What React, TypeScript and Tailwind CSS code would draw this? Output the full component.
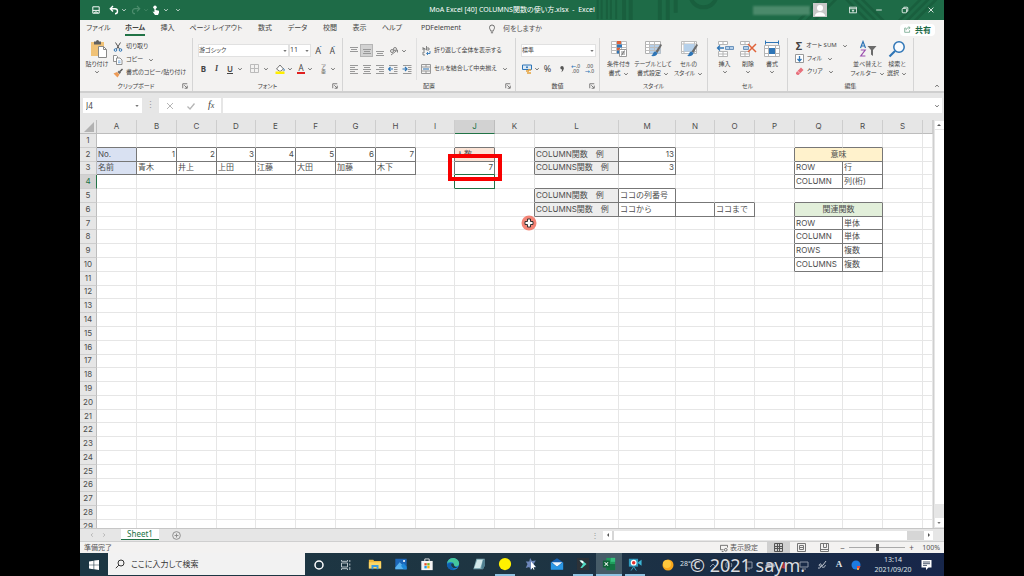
import React from 'react';

type Children = { children?: React.ReactNode };

const Chevron = ({ className = '' }: { className?: string }) => (
  <svg viewBox="0 0 6 6" className={`h-1.5 w-1.5 shrink-0 opacity-80 ${className}`} fill="none" stroke="currentColor">
    <path d="M1.3 2.2 3 3.9 4.7 2.2" />
  </svg>
);

const Caret = () => (
  <svg viewBox="0 0 6 6" className="h-1.5 w-1.5 shrink-0" fill="#777">
    <path d="M1.300 2h3.400L3 4z" />
  </svg>
);

/* ---------- title bar ---------- */

function TitleBar() {
  return (
    <header className="grid h-5 shrink-0 grid-cols-[1fr_auto_1fr] items-center bg-[#1e6b47] text-white">
      <div className="flex items-center pl-3">
        <button aria-label="上書き保存" className="w-[17px]">
          <svg viewBox="0 0 10 10" className="h-2 w-2" fill="none" stroke="white" strokeWidth="1.2">
            <path d="M1 1h8v8H1zM1 5.5h8M3.5 9V7.5h3V9" />
          </svg>
        </button>
        <button aria-label="元に戻す" className="flex w-[22px] items-center gap-0.5">
          <svg viewBox="0 0 10 10" className="h-2.5 w-2.5" fill="none" stroke="white" strokeWidth="1.4">
            <path d="M4 1 1.3 3.7 4 6.4M1.5 3.7H6a2.5 2.5 0 0 1 0 5" />
          </svg>
          <Chevron />
        </button>
        <button aria-label="やり直し" className="flex w-[20px] items-center gap-0.5 text-[#4c8d6d]">
          <svg viewBox="0 0 10 10" className="h-2.5 w-2.5" fill="none" stroke="currentColor" strokeWidth="1.2">
            <path d="M6 1l2.7 2.7L6 6.4M8.5 3.7H4a2.5 2.5 0 0 0 0 5" />
          </svg>
          <Chevron />
        </button>
        <button aria-label="タッチ モード" className="flex w-[24px] items-center gap-0.5">
          <svg viewBox="0 0 10 10" className="h-2.5 w-2.5" fill="white">
            <circle cx="4" cy="2.2" r="1.7" />
            <path d="M3.4 2h1.3v3l3.3.8v2L7 10H4L1.5 6.6l1.9.4z" />
          </svg>
          <Chevron />
        </button>
        <button aria-label="クイック アクセスのユーザー設定"><Chevron /></button>
      </div>
      <h1 className="text-[7px] whitespace-pre">MoA Excel [40] COLUMNS関数の使い方.xlsx  -  Excel</h1>
      <div className="relative flex h-5 items-center justify-end overflow-hidden">
        <svg viewBox="0 0 264 20" preserveAspectRatio="xMaxYMid slice" className="absolute inset-0 h-full w-full" fill="none" stroke="#195f3e">
          <path strokeWidth="1.5" d="M2 0v17M5 0v17M9 0v17M12 0v17M16 0v17" />
          <path strokeWidth="3" d="M22 0v20M27 0v20M49 0v18M55 0v18M61 0v12" />
          <circle cx="82" cy="-2" r="10" strokeWidth="3" />
          <path strokeWidth="2" d="M152 20l20-20M158 20l20-20M164 20l20-20M188 0l20 20M194 0l20 20M200 0l20 20M228 20l20-20M234 20l20-20M240 20l20-20" />
        </svg>
        <div className="relative flex items-center">
          <span className="mr-[3px] h-[9px] w-[57px] bg-[#4b8a6b] blur-[1px]" />
          <svg viewBox="0 0 14 14" className="mr-[13px] h-3.5 w-3.5">
            <path fill="#c9c9c9" d="M0 0h14v14H0z" />
            <circle cx="7" cy="5" r="3" fill="white" />
            <path d="M2 13c0-5 10-5 10 0z" fill="white" />
          </svg>
          <button aria-label="リボンの表示オプション" className="flex w-[26px] justify-center">
            <svg viewBox="0 0 10 10" className="h-2 w-2" fill="none" stroke="white">
              <path d="M.5 1.5h9v7h-9zM.5 3.4h9M5 8V5M3.6 6.2 5 4.8l1.4 1.4" />
            </svg>
          </button>
          <button aria-label="最小化" className="flex w-[26px] justify-center">
            <svg viewBox="0 0 10 10" className="h-2 w-2" stroke="white"><path d="M1.5 5h7" /></svg>
          </button>
          <button aria-label="元のサイズに戻す" className="flex w-[26px] justify-center">
            <svg viewBox="0 0 10 10" className="h-2 w-2" fill="none" stroke="white">
              <rect x="1.5" y="3" width="5.5" height="5.5" rx="1" /><path d="M3.5 3V1.5H7.500a1 1 0 0 1 1 1V6.500H7" />
            </svg>
          </button>
          <button aria-label="閉じる" className="flex w-[26px] justify-center">
            <svg viewBox="0 0 10 10" className="h-2 w-2" stroke="white"><path d="m2 2 6 6M8 2 2 8" /></svg>
          </button>
        </div>
      </div>
    </header>
  );
}

/* ---------- ribbon tabs ---------- */

const tabs = [
  { label: 'ファイル', w: 'w-[37px]' },
  { label: 'ホーム', w: 'w-[36px]' },
  { label: '挿入', w: 'w-[29px]' },
  { label: 'ページ レイアウト', w: 'w-[68px]' },
  { label: '数式', w: 'w-[30px]' },
  { label: 'データ', w: 'w-[35px]' },
  { label: '校閲', w: 'w-[30px]' },
  { label: '表示', w: 'w-[29px]' },
  { label: 'ヘルプ', w: 'w-[36px]' },
  { label: 'PDFelement', w: 'w-[62px]' },
];

function Tabs() {
  return (
    <nav className="flex h-[18px] shrink-0 items-center bg-[#f3f2f1]">
      {tabs.map(({ label, w }) => (
        <button key={label} className={`${w} flex h-full shrink-0 justify-center whitespace-nowrap text-[7px] leading-4`}>
          <span className={label === 'ホーム' ? 'mt-px h-[15px] border-b-2 border-[#217346] leading-[14px] font-bold' : ''}>{label}</span>
        </button>
      ))}
      <svg viewBox="0 0 10 12" className="ml-[15px] h-2.5 w-2.5" fill="none" stroke="#555">
        <path d="M3.500 8.500C3.500 7 2 6.300 2 4.200a3 3 0 0 1 6 0C8 6.300 6.500 7 6.500 8.500zM3.700 10.500h2.600" />
      </svg>
      <input aria-label="何をしますか" placeholder="何をしますか" className="ml-1.5 w-16 bg-transparent text-[7px] placeholder:text-[#555] outline-none" />
      <button className="mr-[9px] ml-auto mt-px flex h-3 items-center gap-1 rounded-sm bg-white px-1 text-[8px] font-bold text-[#1e6b47]">
        <svg viewBox="0 0 10 10" className="h-[7px] w-[7px]" fill="none" stroke="#5b9a7b">
          <path d="M3 3H1v6h7V6M3 6c0-3 2-3.500 5-3.500M6.500.700 8.800 2.500 6.500 4.500" />
        </svg>
        共有
      </button>
    </nav>
  );
}

/* ---------- ribbon ---------- */

function Group({ name, launcher, children }: Children & { name: string; launcher?: boolean }) {
  return (
    <section aria-label={name} className="flex min-w-0 flex-col border-r border-[#d5d5d5]">
      <div className="min-h-0 flex-1">{children}</div>
      <div className="grid h-[11px] grid-cols-[10px_1fr_10px] items-center text-[6px]">
        <span />
        <span className="text-center leading-[10px]">{name}</span>
        {launcher && (
          <button aria-label={`${name}の設定`}>
            <svg viewBox="0 0 8 8" className="h-1.5 w-1.5" fill="none" stroke="#555">
              <path d="M1 7V1h6M3 3l3.500 3.500M7 3.500V7H3.500" />
            </svg>
          </button>
        )}
      </div>
    </section>
  );
}

function BigButton({ icon, lines, w }: { icon: React.ReactNode; lines: string[]; w: string }) {
  return (
    <button className={`${w} flex shrink-0 flex-col items-center whitespace-nowrap text-[6px] leading-[9px]`}>
      {icon}
      <span className="mt-0.5">{lines[0]}</span>
      <span className="flex items-center gap-0.5">{lines[1]}<Chevron /></span>
    </button>
  );
}

function SmallButton({ icon, label, arrow }: { icon: React.ReactNode; label: string; arrow?: boolean }) {
  return (
    <button className="flex h-[13px] items-center gap-[3px] whitespace-nowrap text-[6px]">
      {icon}
      {label}
      {arrow && <Chevron className="ml-0.5" />}
    </button>
  );
}

function IconButton({ label, w = 'w-[13px]', children }: Children & { label: string; w?: string }) {
  return <button aria-label={label} className={`${w} flex h-[13px] shrink-0 items-center justify-center gap-0.5`}>{children}</button>;
}

const Lines = ({ d }: { d: string }) => (
  <svg viewBox="0 0 8 10" className="h-2.5 w-2" stroke="#999" fill="none"><path d={d} /></svg>
);

function ClipboardGroup() {
  return (
    <Group name="クリップボード" launcher>
      <div className="flex pt-0.5 pl-px">
        <BigButton
          w="w-[32px]"
          lines={['貼り付け', '']}
          icon={
            <svg viewBox="0 0 18 18" className="ml-1 h-[18px] w-[18px]">
              <path d="M1 2h13v14H1z" fill="#f0c277" />
              <path d="M4 1.500h2a1.500 1.500 0 0 1 3 0h2V4.500H4z" fill="#606060" />
              <path d="M8.500 6.500h5l3 3V17.500h-8z" fill="white" stroke="#888" />
              <path d="M13.500 6.500v3h3" fill="none" stroke="#888" />
            </svg>
          }
        />
        <div className="flex flex-col">
          <SmallButton label="切り取り" icon={
            <svg viewBox="0 0 10 10" className="h-2.5 w-2.5" fill="none"><path d="M2.500.500 6.500 7M7.500.500 3.500 7" stroke="#555" /><circle cx="2.500" cy="8" r="1.300" stroke="#2e75b6" /><circle cx="7.500" cy="8" r="1.300" stroke="#2e75b6" /></svg>
          } />
          <SmallButton label="コピー" arrow icon={
            <svg viewBox="0 0 10 10" className="h-2.5 w-2.5" fill="white" stroke="#777" strokeWidth=".8"><path d="M.500.500h3l1 1v5h-4z" /><path d="M3.500 3h3.500l2 2v4.500h-5.500z" /><path d="M5 6h2.500M5 7.700h2.500" stroke="#5b9bd5" /></svg>
          } />
          <SmallButton label="書式のコピー/貼り付け" icon={
            <svg viewBox="0 0 10 10" className="h-2.5 w-2.5"><path d="M.500 5.500 4 4l2.500 2.500L4.500 9.500z" fill="#ed9a55" /><path d="m4.500 4 1.500-1.500L8 4.500 6.500 6z" fill="#666" /><path d="m7 3.500 2.500-2.500" stroke="#555" strokeWidth="1.500" /></svg>
          } />
        </div>
      </div>
    </Group>
  );
}

function FontGroup() {
  return (
    <Group name="フォント" launcher>
      <div className="flex items-center pt-1.5 pl-[5px]">
        <label className="flex h-[13px] w-[91px] items-center border border-[#e1e1e1] bg-white">
          <select aria-label="フォント名" className="min-w-0 flex-1 appearance-none text-[6px] outline-none"><option>游ゴシック</option></select>
          <Caret />
        </label>
        <label className="flex h-[13px] w-[22px] items-center border border-[#e1e1e1] bg-white">
          <select aria-label="フォント サイズ" className="min-w-0 flex-1 appearance-none text-[7px] outline-none"><option>11</option></select>
          <Caret />
        </label>
        <IconButton label="フォント サイズの拡大" w="w-[15px]"><span className="text-[9px]">A</span><span className="-ml-1 -mt-1 text-[6px] text-[#2e75b6]">ˆ</span></IconButton>
        <IconButton label="フォント サイズの縮小"><span className="text-[8px]">A</span><span className="-ml-1 -mt-1 text-[6px] text-[#2e75b6]">ˇ</span></IconButton>
      </div>
      <div className="mt-[5px] flex items-center pl-1 text-[8px]">
        <IconButton label="太字"><b>B</b></IconButton>
        <IconButton label="斜体"><i className="font-['Liberation_Serif',serif] font-bold">I</i></IconButton>
        <IconButton label="下線" w="w-[24px]"><span className="font-semibold underline">U</span><Chevron className="ml-0.5" /></IconButton>
        <IconButton label="罫線" w="w-[25px]">
          <svg viewBox="0 0 9 9" className="h-[9px] w-[9px]" fill="none" stroke="#bbb"><path d="M.500.500h8v8h-8zM4.500 1v7M1 4.500h7" /></svg>
          <Chevron className="ml-0.5" />
        </IconButton>
        <IconButton label="塗りつぶしの色" w="w-[23px]">
          <svg viewBox="0 0 10 10" className="h-2.5 w-2.5"><path d="m1.500 5 3.500-4 3.500 4L5 7.500z" fill="white" stroke="#777" /><path d="M8.500 4.500c1.500 1.500.500 2.500 0 2.500" stroke="#2e75b6" fill="none" /><path d="M.500 7.500h9V10h-9z" fill="#ffee00" /></svg>
          <Chevron />
        </IconButton>
        <IconButton label="フォントの色" w="w-[20px]">
          <span className="h-2.5 border-b-2 border-[#e02020] px-px text-[8px] leading-[8px]">A</span>
          <Chevron />
        </IconButton>
        <IconButton label="ふりがな" w="w-[27px]">
          <span className="flex flex-col text-[5px] leading-[5px]"><span>ア</span><span>亜</span></span>
          <Chevron className="ml-0.5" />
        </IconButton>
      </div>
    </Group>
  );
}

function AlignGroup() {
  return (
    <Group name="配置" launcher>
      <div className="flex h-full">
        <div className="w-[74px] border-r border-[#e0e0e0] pt-1.5 pl-1">
          <div className="flex">
            <IconButton label="上揃え"><Lines d="M0 1.500h8M1 3.500h6M0 5.500h8" /></IconButton>
            <button aria-label="上下中央揃え" className="flex h-[13px] w-[13px] items-center justify-center border border-[#b5b5b5] bg-[#d2d2d2]"><Lines d="M0 3.500h8M1 5.500h6M0 7.500h8" /></button>
            <IconButton label="下揃え"><Lines d="M0 5.500h8M1 7.500h6M0 9.500h8" /></IconButton>
            <IconButton label="方向" w="w-[24px]">
              <svg viewBox="0 0 10 10" className="h-2.5 w-2.5" fill="none" stroke="#777" strokeWidth=".9"><circle cx="3" cy="5" r="1.500" /><circle cx="6" cy="3" r="1.500" /><path d="m2 9 6.500-5M8.500 4v2.500" /></svg>
              <Chevron />
            </IconButton>
          </div>
          <div className="mt-[5px] flex">
            <IconButton label="左揃え"><Lines d="M0 1.500h8M0 3.500h5M0 5.500h8M0 7.500h5M0 9.500h8" /></IconButton>
            <IconButton label="中央揃え"><Lines d="M0 1.500h8M1 3.500h6M0 5.500h8M1 7.500h6M0 9.500h8" /></IconButton>
            <IconButton label="右揃え"><Lines d="M0 1.500h8M3 3.500h5M0 5.500h8M3 7.500h5M0 9.500h8" /></IconButton>
            {[['インデントを減らす', 'M5 5H.800M2.500 3 .500 5l2 2'], ['インデントを増やす', 'M.500 5h4.200M3 3l2 2-2 2']].map(([label, d]) => (
              <IconButton key={label} label={label} w="w-[14px]">
                <svg viewBox="0 0 10 10" className="h-2.5 w-2.5" fill="none"><path d="M1 1.500h8.500M6 3.500h3.500M6 5.500h3.500M6 7.500h3.500M1 9.500h8.500" stroke="#999" /><path d={d} stroke="#2e75b6" strokeWidth="1.200" /></svg>
              </IconButton>
            ))}
          </div>
        </div>
        <div className="flex flex-col gap-[5px] pt-1.5 pl-1">
          <SmallButton label="折り返して全体を表示する" icon={
            <svg viewBox="0 0 10 10" className="h-2.5 w-2.5" fill="none" stroke="#777" strokeWidth=".9"><path d="M2 1v3h2V2.500H2M5.500 0v4H8V2H5.500M4 6H2v3h2" /><path d="M9 5v2.500H6M7 6 5.500 7.500 7 9" stroke="#2e75b6" /></svg>
          } />
          <SmallButton label="セルを結合して中央揃え" arrow icon={
            <svg viewBox="0 0 10 10" className="h-2.5 w-2.5" fill="none" stroke="#999"><path d="M.500.500h9v9h-9zM.500 3h9M.500 7h9M5 .500V3M5 7v2.500" /><path d="M2 5h6" stroke="#2e75b6" /></svg>
          } />
        </div>
      </div>
    </Group>
  );
}

function NumberGroup() {
  return (
    <Group name="数値" launcher>
      <div className="pt-1.5 pl-[5px]">
        <label className="flex h-[13px] w-[75px] items-center border border-[#e1e1e1] bg-white">
          <select aria-label="表示形式" className="min-w-0 flex-1 appearance-none text-[6px] outline-none"><option>標準</option></select>
          <Caret />
        </label>
        <div className="mt-[5px] flex text-[9px]">
          <IconButton label="通貨表示形式" w="w-[19px]">
            <svg viewBox="0 0 10 10" className="h-2.5 w-2.5" fill="none"><path d="M.500 1h9v4.500h-9z" stroke="#2e75b6" fill="#dbe9f6" /><circle cx="5" cy="3.200" r="1" fill="#2e75b6" /><path d="M4 7h3M5 9h4M6 6h3" stroke="#e6a23c" strokeWidth="1.400" /></svg>
            <Chevron />
          </IconButton>
          <IconButton label="パーセント スタイル" w="w-[15px]">%</IconButton>
          <IconButton label="桁区切りスタイル">
            <svg viewBox="0 0 6 8" className="h-2 w-1.5" fill="#555"><circle cx="3" cy="2.800" r="1.700" /><path d="M4.700 2.800C4.700 5 4 6.500 2 7.200c1-1.200 1.200-2.200 1-3.500z" /></svg>
          </IconButton>
          <IconButton label="小数点以下の表示桁数を増やす" w="w-[15px]">
            <span className="flex flex-col text-[5px] leading-[5px]"><span><b className="text-[#2e75b6]">←</b>.0</span><span>.00</span></span>
          </IconButton>
          <IconButton label="小数点以下の表示桁数を減らす">
            <span className="flex flex-col text-[5px] leading-[5px]"><span>.00</span><span><b className="text-[#2e75b6]">→</b>.0</span></span>
          </IconButton>
        </div>
      </div>
    </Group>
  );
}

const Brush = () => (
  <>
    <path d="m17.500 4-5 7.500 2 1.500L19 5z" fill="#6b6b6b" />
    <path d="M12.500 11.500c-2.500 0-2 3-4.500 4.500 3 .500 6 0 6.500-3z" fill="#2e75b6" />
  </>
);

function StyleGroup() {
  return (
    <Group name="スタイル">
      <div className="flex pt-0.5 pl-1">
        <BigButton w="w-[29px]" lines={['条件付き', '書式']} icon={
          <svg viewBox="0 0 18 18" className="h-[18px] w-[18px]"><path d="M1.500 1.500h15v12h-15zM1.500 4.500h15M1.500 7.500h15M1.500 10.500h15M6.500 1.500v12M11.500 1.500v12" stroke="#bdbdbd" fill="white" /><path d="M7 1h4v3H7zM7 7.500h3v3H7z" fill="#e0633a" /><path d="M7 4.500h5v3H7zM7 10.500h2v3H7z" fill="#2e75b6" /><path d="M9.500 9.500h7v7h-7z" fill="white" stroke="#999" /><path d="M11 12h4M11 14h4M14.500 10.500l-3 5" stroke="#666" strokeWidth=".8" /></svg>
        } />
        <BigButton w="w-[40px]" lines={['テーブルとして', '書式設定']} icon={
          <svg viewBox="0 0 20 18" className="h-[18px] w-5"><path d="M2.500 1.500h15v12h-15z" fill="white" stroke="#b0b0b0" /><path d="M6 5h11.500v8.500H6z" fill="#b5d0ea" /><path d="M2.500 4.500h15M2.500 7.500h15M2.500 10.500h15M6.500 1.500v12M11.500 1.500v12" stroke="#bdbdbd" /><Brush /></svg>
        } />
        <BigButton w="w-[31px]" lines={['セルの', 'スタイル']} icon={
          <svg viewBox="0 0 20 18" className="h-[18px] w-5"><path d="M2.500 1.500h15v12h-15zM2.500 4h15M2.500 11.500h15M5 1.500v12M15.500 1.500v12" fill="white" stroke="#bdbdbd" /><path d="M5 4h10.500v7.500H5z" fill="#b5d0ea" /><Brush /></svg>
        } />
      </div>
    </Group>
  );
}

function CellGroup() {
  return (
    <Group name="セル">
      <div className="flex pt-0.5 pl-[5px]">
        <BigButton w="w-[23px]" lines={['挿入', '']} icon={
          <svg viewBox="0 0 18 18" className="h-[18px] w-[18px]" fill="white" stroke="#b5b5b5"><path d="M2.500 1.500h9v3h-9zM7 1.500v3M2.500 11.500h9v5h-9zM7 11.500v5M2.500 14h9" /><path d="M9.500 6.500h8v3h-8zM13.500 6.500v3" fill="#b5d0ea" stroke="#6c94bd" /><path d="M8 8H1.500M4 5.500 1.500 8 4 10.500" fill="none" stroke="#2e75b6" strokeWidth="1.300" /></svg>
        } />
        <BigButton w="w-[24px]" lines={['削除', '']} icon={
          <svg viewBox="0 0 18 18" className="h-[18px] w-[18px]" fill="white" stroke="#b5b5b5"><path d="M1.500 1.500h9v3h-9zM6 1.500v3M1.500 11.500h9v5h-9zM6 11.500v5M1.500 14h9" /><path d="M4.500 6.500h5v3h-5z" fill="#b5d0ea" stroke="#6c94bd" /><path d="m9 4 8 8M17 4l-8 8" stroke="#e0633a" strokeWidth="1.500" /></svg>
        } />
        <BigButton w="w-[24px]" lines={['書式', '']} icon={
          <svg viewBox="0 0 18 18" className="h-[18px] w-[18px]" fill="none"><path d="M1.500 5.500h15v11h-15zM1.500 8.500h15M1.500 13.500h15M5.500 5.500v11M12.500 5.500v11" fill="white" stroke="#b5b5b5" /><path d="M6 8h6v6H6z" fill="#2e75b6" /><path d="M3 2.500h12M2.500.500v4M15.500.500v4" stroke="#2e75b6" /></svg>
        } />
      </div>
    </Group>
  );
}

function EditGroup() {
  return (
    <Group name="編集">
      <div className="flex">
        <div className="flex w-[64px] flex-col pt-px pl-[7px]">
          <SmallButton label="オート SUM" arrow icon={<span className="w-2 text-[11px] leading-3 font-bold">Σ</span>} />
          <SmallButton label="フィル" arrow icon={
            <svg viewBox="0 0 9 9" className="h-[9px] w-[9px]" fill="white"><path d="M.500.500h8v8h-8z" stroke="#999" /><path d="M4.500 2v5M2.500 5l2 2 2-2" stroke="#2e75b6" fill="none" strokeWidth="1.300" /></svg>
          } />
          <SmallButton label="クリア" arrow icon={
            <svg viewBox="0 0 9 9" className="h-[9px] w-[9px]"><path d="m1 5.500 5-5 2.500 2.500-5 5H2.500L1 7z" fill="#e8707c" /><path d="m2.500 4 2.500 2.500" stroke="white" strokeWidth=".6" /></svg>
          } />
        </div>
        <div className="flex pt-0.5">
          <BigButton w="w-[31px]" lines={['並べ替えと', 'フィルター']} icon={
            <svg viewBox="0 0 18 18" className="h-[18px] w-[18px]" fill="none"><path d="m1.500 8 2.500-6.500L6.500 8M2.500 6h3" stroke="#2e75b6" strokeWidth="1.200" /><path d="M1.800 10h4.400l-4.400 6h4.600" stroke="#9b4fb0" strokeWidth="1.200" /><path d="M8.500 6h9l-3.500 4v6l-2-1.500V10z" fill="#6b6b6b" /></svg>
          } />
          <BigButton w="w-[28px]" lines={['検索と', '選択']} icon={
            <svg viewBox="0 0 18 18" className="h-[18px] w-[18px]" fill="none" stroke="#2e75b6"><circle cx="11" cy="7" r="5.200" strokeWidth="1.500" fill="#f8fbfe" /><path d="m7 11-5.500 5.500" strokeWidth="2.200" /></svg>
          } />
        </div>
      </div>
    </Group>
  );
}

function Ribbon() {
  return (
    <div className="grid h-[55px] shrink-0 grid-cols-[113px_150px_173px_84px_108px_80px_126px_1fr] border-b-2 border-[#cfcfcf] bg-[#f3f2f1]">
      <ClipboardGroup />
      <FontGroup />
      <AlignGroup />
      <NumberGroup />
      <StyleGroup />
      <CellGroup />
      <EditGroup />
      <button aria-label="リボンを折りたたむ" className="mr-1 self-end justify-self-end">
        <Chevron className="mb-0.5 rotate-180" />
      </button>
    </div>
  );
}

/* ---------- formula bar ---------- */

function FormulaBar() {
  return (
    <div className="flex h-[27px] shrink-0 items-start bg-[#e6e6e6] pt-[5px] pr-0.5 pl-[3px]">
      <label className="flex h-[15px] w-[59px] items-center bg-white pr-0.5 pl-[3px]">
        <input aria-label="名前ボックス" defaultValue="J4" className="w-0 min-w-0 flex-1 text-[8px] outline-none" />
        <Caret />
      </label>
      <span className="w-[17px] text-center text-[9px] leading-[14px] text-[#999]">⋮</span>
      <div className="mr-0.5 flex h-[15px] w-[62px] items-center justify-around bg-white">
        <button aria-label="キャンセル"><svg viewBox="0 0 8 8" className="h-2 w-2" stroke="#b5b5b5"><path d="m1 1 6 6M7 1 1 7" /></svg></button>
        <button aria-label="入力"><svg viewBox="0 0 8 8" className="h-2 w-2" stroke="#b5b5b5" fill="none" strokeWidth="1.300"><path d="m.500 4.500 2.500 2.500 4.500-5.500" /></svg></button>
        <button aria-label="関数の挿入" className="font-['Liberation_Serif',serif] text-[10px] leading-3 italic">f<span className="text-[8px]">x</span></button>
      </div>
      <label className="flex h-[15px] flex-1 items-center bg-white pr-0.5">
        <input aria-label="数式バー" className="min-w-0 flex-1 text-[8px] outline-none" />
        <Chevron />
      </label>
    </div>
  );
}

/* ---------- worksheet ---------- */

const columns = [
  { id: 'A', w: 'w-[40px]' },
  { id: 'B', w: 'w-[40px]' },
  { id: 'C', w: 'w-[40px]' },
  { id: 'D', w: 'w-[39px]' },
  { id: 'E', w: 'w-[40px]' },
  { id: 'F', w: 'w-[40px]' },
  { id: 'G', w: 'w-[40px]' },
  { id: 'H', w: 'w-[40px]' },
  { id: 'I', w: 'w-[39px]' },
  { id: 'J', w: 'w-[40px]' },
  { id: 'K', w: 'w-[40px]' },
  { id: 'L', w: 'w-[84px]' },
  { id: 'M', w: 'w-[57px]' },
  { id: 'N', w: 'w-[39px]' },
  { id: 'O', w: 'w-[40px]' },
  { id: 'P', w: 'w-[40px]' },
  { id: 'Q', w: 'w-[48px]' },
  { id: 'R', w: 'w-[40px]' },
  { id: 'S', w: 'w-[40px]' },
  { id: '', w: '' },
];

const cells: Record<string, string> = {
  A2: 'No.', B2: '1', C2: '2', D2: '3', E2: '4', F2: '5', G2: '6', H2: '7',
  A3: '名前', B3: '青木', C3: '井上', D3: '上田', E3: '江藤', F3: '大田', G3: '加藤', H3: '木下',
  J2: '人数', J3: '7',
  L2: 'COLUMN関数　例', M2: '13', L3: 'COLUMNS関数　例', M3: '3',
  L5: 'COLUMN関数　例', M5: 'ココの列番号', L6: 'COLUMNS関数　例', M6: 'ココから', N6: '', O6: 'ココまで',
  Q2: '意味', R2: '', Q3: 'ROW', R3: '行', Q4: 'COLUMN', R4: '列(桁)',
  Q6: '関連関数', R6: '', Q7: 'ROW', R7: '単体', Q8: 'COLUMN', R8: '単体', Q9: 'ROWS', R9: '複数', Q10: 'COLUMNS', R10: '複数',
};

const fills: Record<string, string> = {
  A2: 'bg-[#d9e1f2]', A3: 'bg-[#d9e1f2]', J2: 'bg-[#fce4d6]',
  L2: 'bg-[#ededed]', L3: 'bg-[#ededed]', L5: 'bg-[#ededed]', L6: 'bg-[#ededed]',
  Q2: 'bg-[#fff2cc]', Q6: 'bg-[#e2efda]',
};

const merged = ['Q2', 'Q6'];
const rowNumbers = Array.from({ length: 29 }, (_, i) => i + 1);
const boxed = (col: number, row: number) => col < columns.length && `${columns[col].id}${row}` in cells;

function Cell({ col, row }: { col: number; row: number }) {
  const key = `${columns[col].id}${row}`;
  if (key === 'R2' || key === 'R6') return null;
  const wide = merged.includes(key);
  const selected = key === 'J4';
  const right = selected || (col === 8 && row === 4) ? 'border-r-[#217346]' : boxed(col, row) || boxed(col + 1, row) ? 'border-r-[#777]' : 'border-r-[#e6e6e6]';
  const bottom = selected || key === 'J3' ? 'border-b-[#217346]' : boxed(col, row) || boxed(col, row + 1) ? 'border-b-[#777]' : 'border-b-[#e6e6e6]';
  const text = cells[key] ?? '';
  const align = wide ? 'text-center' : /^\d+$/.test(text) ? 'text-right' : 'text-left';
  return (
    <td colSpan={wide ? 2 : 1} className={`overflow-hidden border-r border-b p-0 px-px whitespace-nowrap ${right} ${bottom} ${align} ${fills[key] ?? ''}`}>
      {text}
    </td>
  );
}

function Sheet() {
  return (
    <div className="flex min-h-0 flex-1 bg-[#e6e6e6]">
      <div className="relative min-w-0 flex-1 overflow-hidden">
        <table className="h-[414px] w-full table-fixed border-separate border-spacing-0 bg-white font-['Inter','Noto_Sans_CJK_JP',sans-serif] text-[8px] leading-[11px] text-[#4d4d4d] [font-feature-settings:normal]">
          <colgroup>
            <col className="w-[17px]" />
            {columns.map(({ id, w }) => <col key={id} className={w} />)}
          </colgroup>
          <thead>
            <tr className="h-[14px] bg-[#e6e6e6]">
              <th className="border-r border-b border-[#bdbdbd] p-0">
                <svg viewBox="0 0 16 13" className="h-[13px] w-4"><path d="M14 2v10H4z" fill="#b2b2b2" /></svg>
              </th>
              {columns.map(({ id }) => (
                <th key={id} className={`border-r border-b p-0 font-normal ${id === 'J' ? 'border-r-[#bdbdbd] border-b-[#217346] bg-[#d2d2d2] text-[#217346]' : 'border-r-[#cdcdcd] border-b-[#bdbdbd]'}`}>{id}</th>
              ))}
            </tr>
          </thead>
          <tbody>
            {rowNumbers.map((row) => (
              <tr key={row}>
                <th className={`border-r border-b border-b-[#cdcdcd] p-0 text-center font-normal ${row === 4 ? 'border-r-[#217346] bg-[#d2d2d2] text-[#217346]' : 'border-r-[#bdbdbd] bg-[#e6e6e6]'}`}>{row}</th>
                {columns.map((c, i) => <Cell key={c.id} col={i} row={row} />)}
              </tr>
            ))}
          </tbody>
        </table>
        <div className="absolute top-[34px] left-[368px] h-[27px] w-[54px] border-4 border-[#f80000]" />
        <svg viewBox="0 0 16 16" className="absolute top-[95px] left-[441px] h-4 w-4">
          <circle cx="8" cy="8" r="7.500" fill="#f2705f" opacity=".85" />
          <path d="M6.500 4h3v2.500H12v3H9.500V12h-3V9.500H4v-3h2.500z" fill="white" stroke="#333" />
        </svg>
      </div>
      <div className="flex w-[11px] shrink-0 flex-col items-center border-l border-[#cfcfcf] py-px">
        <button aria-label="上へスクロール" className="flex h-2 w-[9px] items-center justify-center bg-white"><svg viewBox="0 0 6 6" className="h-1.5 w-1.5" fill="#555"><path d="M1 4h4L3 2z" /></svg></button>
        <div className="mt-px mb-[14px] w-[9px] flex-1 bg-white" />
        <button aria-label="下へスクロール" className="flex h-[9px] w-[9px] items-center justify-center bg-white"><Caret /></button>
      </div>
    </div>
  );
}

function SheetTabs() {
  return (
    <div className="flex h-[13px] shrink-0 items-center border-t border-[#c6c6c6] bg-[#e6e6e6]">
      <div className="flex w-[41px] items-center gap-1.5 pl-[9px] text-[#aaa]">
        <button aria-label="前のシート"><Chevron className="rotate-90" /></button>
        <button aria-label="次のシート"><Chevron className="-rotate-90" /></button>
      </div>
      <button className="h-[11px] w-[38px] self-start border-b border-[#217346] bg-white text-[8px] leading-[10px] text-[#217346]">Sheet1</button>
      <button aria-label="新しいシート" className="ml-[13px]">
        <svg viewBox="0 0 10 10" className="h-[9px] w-[9px]" fill="none" stroke="#888"><circle cx="5" cy="5" r="4.300" /><path d="M5 2.800v4.400M2.800 5h4.400" /></svg>
      </button>
      <span className="mr-1 ml-auto text-[8px] leading-[10px] text-[#999]">⋮</span>
      <div className="mr-[11px] flex h-[9px] w-[330px] items-center bg-[#d6d6d6]">
        <button aria-label="左へスクロール" className="mr-0.5 flex h-full w-[9px] items-center justify-center bg-white"><svg viewBox="0 0 6 6" className="h-1.5 w-1.5" fill="#555"><path d="M4 1v4L2 3z" /></svg></button>
        <div className="mr-[17px] h-full flex-1 bg-white" />
        <button aria-label="右へスクロール" className="flex h-full w-[9px] items-center justify-center bg-white"><svg viewBox="0 0 6 6" className="h-1.5 w-1.5" fill="#555"><path d="M2 1v4l2-2z" /></svg></button>
      </div>
    </div>
  );
}

function StatusBar() {
  return (
    <div className="flex h-3 shrink-0 items-center border-t border-[#cfcfcf] bg-[#f3f2f1] pl-1 text-[7px] leading-[11px] text-[#555]">
      <span>準備完了</span>
      <button className="mr-[9px] ml-auto flex items-center gap-0.5">
        <svg viewBox="0 0 9 9" className="h-2 w-2" fill="none" stroke="#666"><path d="M4 6.500H.500v-5h8V4M2 8.500h2" /><circle cx="6.500" cy="6.500" r="1.500" /></svg>
        表示設定
      </button>
      <button aria-label="標準" className="flex h-3 w-[23px] items-center justify-center bg-[#d0d0d0]"><svg viewBox="0 0 9 9" className="h-[9px] w-[9px]" fill="none" stroke="#555"><path d="M.500.500h8v8h-8zM.500 3.500h8M.500 5.500h8M3.500.500v8M5.500.500v8" /></svg></button>
      <button aria-label="ページ レイアウト" className="flex w-[23px] justify-center"><svg viewBox="0 0 9 9" className="h-[9px] w-[9px]" fill="none" stroke="#777"><path d="M.500.500h8v8h-8zM2.500 2.500h4v4h-4zM3 4.500h3" /></svg></button>
      <button aria-label="改ページ プレビュー" className="flex w-[23px] justify-center"><svg viewBox="0 0 9 9" className="h-[9px] w-[9px]" fill="none" stroke="#777"><path d="M.500.500h8v8h-8zM3.500.500v4h3v-4M.500 6.500h8" /></svg></button>
      <button aria-label="縮小" className="ml-0.5 w-[9px] text-[8px]">−</button>
      <input aria-label="ズーム" type="range" defaultValue="50" className="mx-0.5 h-[7px] w-[56px] appearance-none bg-[linear-gradient(#aaa,#aaa)] bg-[length:100%_1px] bg-center bg-no-repeat [&::-webkit-slider-thumb]:h-[7px] [&::-webkit-slider-thumb]:w-[3px] [&::-webkit-slider-thumb]:appearance-none [&::-webkit-slider-thumb]:bg-[#555]" />
      <button aria-label="拡大" className="w-[9px] text-[8px]">+</button>
      <span className="mr-1 w-6 text-right">100%</span>
    </div>
  );
}

/* ---------- task bar ---------- */

const apps: { name: string; state?: 'open' | 'active'; art: React.ReactNode }[] = [
  { name: 'エクスプローラー', art: <><path d="M1 3h5l1 1.500h8V13H1z" fill="#f0b93a" /><path d="M1 6h14v7H1z" fill="#fbd768" /><path d="M4 14V9h8v5H9.800v-2.500H6.200V14z" fill="#3b9be0" /></> },
  { name: 'フォト', art: <><path d="M1.500 2h13v12h-13z" fill="#1c66b8" /><path d="m1.500 12 5-6 8 8h-13z" fill="#58b3ef" /><path d="m8 10 3-3 3.500 4v3H11z" fill="#1e88d8" /><circle cx="11.500" cy="4.500" r="1.200" fill="white" /></> },
  { name: 'Microsoft Store', art: <><path d="M5.500 5V2.200h5V5" fill="none" stroke="#eee" /><path d="M1.500 4.500h13V15h-13z" fill="#f4f4f4" /><path d="M5 7h2.700v2.700H5z" fill="#e5552d" /><path d="M8.300 7H11v2.700H8.300z" fill="#7ab51d" /><path d="M5 10.300h2.700V13H5z" fill="#1a9ee5" /><path d="M8.300 10.300H11V13H8.300z" fill="#f6b60d" /></> },
  { name: 'Microsoft Edge', art: <><circle cx="8" cy="8" r="7" fill="#1b7fd0" /><path d="M1.200 7C2 3 5 1 8 1c4 0 7 3 7 6.500 0 2-1.500 3.200-3.500 3.200S9 9.500 9 8.500C9.500 6 5 4.500 1.200 7z" fill="#45c69b" /><path d="M5.800 7c-1 3 1 6 5 6.500-3 2.500-9 1.500-9.700-4C1.500 7.500 4 6.500 5.800 7z" fill="#0f5fae" /><path d="M9 8.500c-1-1.500-3-2-3.200.500.200 3 3.700 4.500 7.500 3-1.500-.500-4.300-1-4.300-3.500z" fill="#1e3a47" /></> },
  { name: 'メモ帳', art: <><path d="M5 2h9.500v8l-2 4H1.500z" fill="#7fa9b2" /><path d="M6 3h6.500l-3 9.500H2.500z" fill="#d3e8ea" /><path d="M12.500 3h2v7l-2 4-2-1z" fill="#4f7f90" /></> },
  { name: '録音', state: 'open', art: <circle cx="8" cy="8" r="7" fill="#fff000" /> },
  { name: 'ポインター', art: <><path d="m2 5 4 0 1-4 2 3.500L13.500 4 11 8l3 4-4-1-2 4-2-3.500-4 1 2-4.500z" fill="#6e88bb" /><path d="m8 5 5.500 6.500-2.500.200 1 2.500-1 .5-1.200-2.500L8 14z" fill="white" /></> },
  { name: 'メール', art: <><path d="m1 6 7-4.500L15 6v8H1z" fill="#1660ae" /><path d="M2 6h12l-6 5z" fill="#eef6fc" /><path d="m1 6 7 5 7-5v8.500H1z" fill="#2a97e4" /></> },
  { name: 'Filmora', state: 'open', art: <><path d="M1 1h14v14H1z" fill="#2c3238" /><path d="M4 4h3l5 4-5 4.500H5L8 8z" fill="#52dcc4" /><path d="M4 4h3l2 1.700L7.500 7.300z" fill="white" /></> },
  { name: 'Excel', state: 'active', art: <><path d="M5 1h10v14H5z" fill="#1f9d5c" /><path d="M10 1h5v4.500h-5z" fill="#37c17f" /><path d="M5 8h10v7H5z" fill="#137242" /><path d="M1 4h8v8H1z" fill="#0f6238" /><path d="m3 6 4 4M7 6l-4 4" stroke="white" strokeWidth="1.200" /></> },
  { name: '画面録画', state: 'open', art: <><path d="M1 2h10.500v9H1z" fill="#2f9cc0" /><path d="m11.500 6 4-3v7l-4-3z" fill="#3cb7d7" /><circle cx="6.500" cy="6.500" r="3.300" fill="white" /><circle cx="6.500" cy="6.500" r="2" fill="#e5322e" /><path d="m6.500 11-3 4.500M6.500 11l3 4.500" stroke="#3cb7d7" /></> },
];

function TaskBar() {
  return (
    <footer className="flex h-[23px] shrink-0 items-center bg-linear-to-r from-[#1c3643] via-[#1e3542] to-[#17264a] text-white">
      <button aria-label="スタート" className="flex w-7 justify-center">
        <svg viewBox="0 0 10 10" className="h-2.5 w-2.5" fill="white"><path d="M0 1.400 4.600.700v4H0zM5.200.600 10 0v4.700H5.200zM0 5.300h4.600v4L0 8.600zM5.200 5.300H10V10l-4.800-.700z" /></svg>
      </button>
      <label className="mb-px flex h-[22px] w-[197px] items-center bg-[#f2f2f2] pl-[7px] text-[#333]">
        <svg viewBox="0 0 10 10" className="h-2.5 w-2.5" fill="none" stroke="#333"><circle cx="6" cy="4" r="3" /><path d="M3.800 6.200.800 9.200" /></svg>
        <input aria-label="検索" placeholder="ここに入力して検索" className="ml-1.5 w-32 bg-transparent text-[8px] placeholder:text-[#333] outline-none" />
      </label>
      <button aria-label="Cortana" className="ml-px flex w-[26px] justify-center"><svg viewBox="0 0 10 10" className="h-2.5 w-2.5" fill="none" stroke="white" strokeWidth="1.500"><circle cx="5" cy="5" r="4" /></svg></button>
      <button aria-label="タスク ビュー" className="mr-0.5 flex w-[28px] justify-center"><svg viewBox="0 0 10 10" className="h-2.5 w-2.5" fill="none" stroke="#b9c3c8"><path d="M.500 3h6v4h-6zM.500 0v1.300h6V0M.500 10V8.700h6V10M8.800 0v2M8.800 3.500v2M8.800 7v3" /></svg></button>
      {apps.map(({ name, state, art }) => (
        <button key={name} aria-label={name} className={`flex h-full w-[26px] shrink-0 flex-col items-center ${state === 'active' ? 'bg-[#465c68]' : ''}`}>
          <svg viewBox="0 0 16 16" className="mt-1 h-3.5 w-3.5">{art}</svg>
          {state && <span className={`mt-auto h-0.5 bg-[#8fc3e2] ${state === 'active' ? 'w-full' : 'w-5'}`} />}
        </button>
      ))}
      <div className="relative ml-auto flex h-full w-[282px] items-center text-[8px] text-[#dfe3e8]">
        <svg viewBox="0 0 12 12" className="h-3 w-3"><circle cx="6" cy="6" r="5.500" fill="#f8a71c" /><circle cx="5" cy="5" r="4" fill="#ffc83d" /></svg>
        <span className="ml-1.5 w-7 text-[7px]">28℃</span>
        <svg viewBox="0 0 108 12" className="h-3 w-[108px]" fill="none" stroke="#8b95a5">
          <path d="m2 8 3-3 3 3M18 4v4l3 2V2zM23 4c1 1 1 3 0 4M38 3h6v6h-6zM41 9v2" />
          <path d="M58 8a3 3 0 0 1 5-3 2 2 0 0 1 3 3z" fill="#dde" />
          <path d="M92 3h8v5h-8zM94 10h4" />
          <path d="m75 3 4 2-1 5-4-1z" fill="#d8383c" stroke="none" />
        </svg>
        <svg viewBox="0 0 10 10" className="mr-1.5 ml-px h-2.5 w-2.5" fill="none" stroke="#cfd5dd" strokeWidth=".9"><path d="M1 8c4 1 4-5 2-4s0 4 3 1l3-4M5 7c2 1 4-1 3-2" /></svg>
        <b className="w-3 text-center font-['Liberation_Serif',serif] text-[9px]">A</b>
        <svg viewBox="0 0 10 10" className="mr-1 ml-1.5 h-2.5 w-2.5"><circle cx="5" cy="5" r="4.500" fill="#1d7be0" /><path d="M6 6h3.500L8 9.500H6z" fill="#e9483b" /><circle cx="7" cy="9" r="1" fill="#ffc83d" /></svg>
        <time className="ml-1.5 w-[44px] text-center text-[7px] leading-[10px] whitespace-nowrap">13:14<br />2021/09/20</time>
        <button aria-label="通知" className="ml-1.5"><svg viewBox="0 0 11 11" className="h-[11px] w-[11px]"><path d="M.500 1h10v7.500H7.500L5 11V8.500H.500z" fill="white" /><path d="M2 3h7M2 4.700h7M2 6.400h4" stroke="#26364f" strokeWidth=".8" /></svg></button>
        <p className="absolute top-0.5 left-7 text-[18px] leading-5 whitespace-nowrap text-[#d9dde3] [text-shadow:0_0_2px_#222]">© 2021 saym.</p>
      </div>
    </footer>
  );
}

export default function App() {
  return (
    <div className="h-screen bg-black px-20">
      <main className="flex h-full flex-col overflow-hidden bg-[#e6e6e6] font-['Noto_Sans','Noto_Sans_CJK_JP',sans-serif] text-[#444] [font-feature-settings:'palt']">
        <TitleBar />
        <Tabs />
        <Ribbon />
        <FormulaBar />
        <Sheet />
        <SheetTabs />
        <StatusBar />
        <TaskBar />
      </main>
    </div>
  );
}
